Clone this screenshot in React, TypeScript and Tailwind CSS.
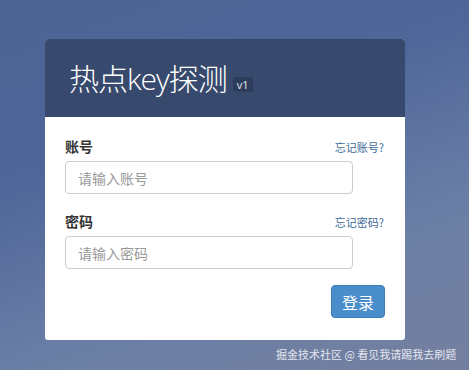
export default function App() {
    return (
        <div className="relative h-[370px] w-[469px] overflow-hidden bg-[linear-gradient(160deg,#4c6394_0%,#4f6699_35%,#6b7fa6_70%,#747f9f_100%)] font-['Noto_Sans_CJK_SC',sans-serif]">
            <div className="flex flex-col pl-[45px] pt-[39px]">
                {/* Card */}
                <div className="w-[360px] overflow-hidden rounded-[3px] bg-white">
                    {/* Header */}
                    <div className="flex h-[78px] items-center bg-[#37496d] pl-[24px] pt-[2px]">
                        <h1 className="text-[30px] font-light leading-none tracking-[-1px] text-white font-['Open_Sans','Noto_Sans_CJK_SC',sans-serif]">
                            热点key探测
                        </h1>
                        <span className="ml-[6px] mt-[10px] rounded-[2px] bg-[#2d3c5a] px-[4px] py-[1px] text-[11px] leading-[13px] text-[#e6ebf3] font-['Open_Sans',sans-serif]">
                            v1
                        </span>
                    </div>

                    {/* Form */}
                    <form className="flex flex-col px-[20px] pb-[22px] pt-[19px]">
                        <div className="flex items-end justify-between pr-[1px]">
                            <label className="text-[14px] font-bold leading-[20px] text-[#333]">账号</label>
                            <a className="text-[11px] leading-[18px] text-[#3d6c98]">忘记账号?</a>
                        </div>
                        <input
                            placeholder="请输入账号"
                            className="mt-[5px] h-[33px] w-[288px] rounded-[4px] border border-[#cccccc] px-[12px] text-[14px] text-[#555] placeholder-[#999] outline-none"
                        />

                        <div className="mt-[17px] flex items-end justify-between pr-[1px]">
                            <label className="text-[14px] font-bold leading-[20px] text-[#333]">密码</label>
                            <a className="text-[11px] leading-[18px] text-[#3d6c98]">忘记密码?</a>
                        </div>
                        <input
                            type="password"
                            placeholder="请输入密码"
                            className="mt-[5px] h-[33px] w-[288px] rounded-[4px] border border-[#cccccc] px-[12px] text-[14px] text-[#555] placeholder-[#999] outline-none"
                        />

                        <div className="mt-[16px] flex justify-end">
                            <button
                                type="button"
                                className="h-[33px] w-[54px] rounded-[4px] border border-[#3a7fba] bg-[#4a8dcb] text-[16px] text-white"
                            >
                                登录
                            </button>
                        </div>
                    </form>
                </div>

                <div className="mt-[6px] pl-[231px] text-[11px] leading-[16px] text-[#e3e6ee] whitespace-nowrap">
                    掘金技术社区 @ 看见我请踢我去刷题
                </div>
            </div>
        </div>
    );
}
